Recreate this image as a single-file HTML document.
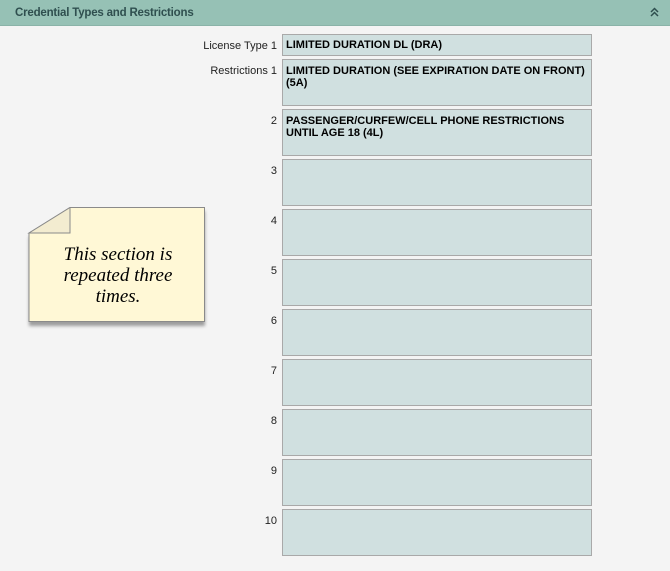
<!DOCTYPE html>
<html><head><style>
body{margin:0;width:670px;height:571px;background:#f4f4f4;font-family:"Liberation Sans",sans-serif;font-size:11px;position:relative;overflow:hidden}
.hdr{position:absolute;left:0;top:0;width:670px;height:25px;background:#96c1b5;border-bottom:1px solid #8ab3a8}
.hdr span{position:absolute;left:15px;top:7px;font-weight:bold;color:#2f4f4f;font-size:11.5px;letter-spacing:-0.2px}
.box{position:absolute;left:282px;width:310px;background:#d0e0e0;border:1px solid #a9a9a9;font-weight:bold;color:#000;padding:5px 0 0 3px;box-sizing:border-box;font-size:11px;line-height:12px}
.lbl{position:absolute;right:393px;color:#222;font-size:11px;text-align:right;margin-top:1px}
.note{position:absolute;left:24px;top:207px}
</style></head><body>
<div class="hdr"><span>Credential Types and Restrictions</span>
<svg style="position:absolute;left:650px;top:7px" width="9" height="11" viewBox="0 0 9 11"><path d="M1 5 L4.5 1.5 L8 5 M1 9 L4.5 5.5 L8 9" fill="none" stroke="#2f4f4f" stroke-width="1.5"/></svg></div>
<div class="lbl" style="top:39px">License Type 1</div>
<div class="box" style="top:34px;height:22px;padding-top:4px">LIMITED DURATION DL (DRA)</div>
<div class="lbl" style="top:64px">Restrictions 1</div>
<div class="box" style="top:59px;height:47px">LIMITED DURATION (SEE EXPIRATION DATE ON FRONT)<br>(5A)</div>
<div class="lbl" style="top:114px">2</div>
<div class="box" style="top:109px;height:47px">PASSENGER/CURFEW/CELL PHONE RESTRICTIONS<br>UNTIL AGE 18 (4L)</div>
<div class="lbl" style="top:164px">3</div><div class="box" style="top:159px;height:47px"></div>
<div class="lbl" style="top:214px">4</div><div class="box" style="top:209px;height:47px"></div>
<div class="lbl" style="top:264px">5</div><div class="box" style="top:259px;height:47px"></div>
<div class="lbl" style="top:314px">6</div><div class="box" style="top:309px;height:47px"></div>
<div class="lbl" style="top:364px">7</div><div class="box" style="top:359px;height:47px"></div>
<div class="lbl" style="top:414px">8</div><div class="box" style="top:409px;height:47px"></div>
<div class="lbl" style="top:464px">9</div><div class="box" style="top:459px;height:47px"></div>
<div class="lbl" style="top:514px">10</div><div class="box" style="top:509px;height:47px"></div>
<svg class="note" width="190" height="125" viewBox="0 0 190 125">
<defs><filter id="b" x="-10%" y="-10%" width="130%" height="130%"><feGaussianBlur stdDeviation="1.5"/></filter></defs>
<path d="M5 30 L46 4 L181 4 L181 119 L5 119 Z" fill="#555" opacity="0.55" filter="url(#b)"/>
<path d="M5 26 L46 0.5 L180.5 0.5 L180.5 114.5 L5 114.5 Z" fill="#fff8d6" stroke="#8a8a8a"/>
<path d="M46 0.5 L46 26 L5 26 Z" fill="#f3ecd0" stroke="#8a8a8a"/>
<text x="94" y="53" text-anchor="middle" font-family="Liberation Serif,serif" font-style="italic" font-size="19">This section is</text>
<text x="94" y="74" text-anchor="middle" font-family="Liberation Serif,serif" font-style="italic" font-size="19">repeated three</text>
<text x="94" y="95" text-anchor="middle" font-family="Liberation Serif,serif" font-style="italic" font-size="19">times.</text>
</svg>
</body></html>
